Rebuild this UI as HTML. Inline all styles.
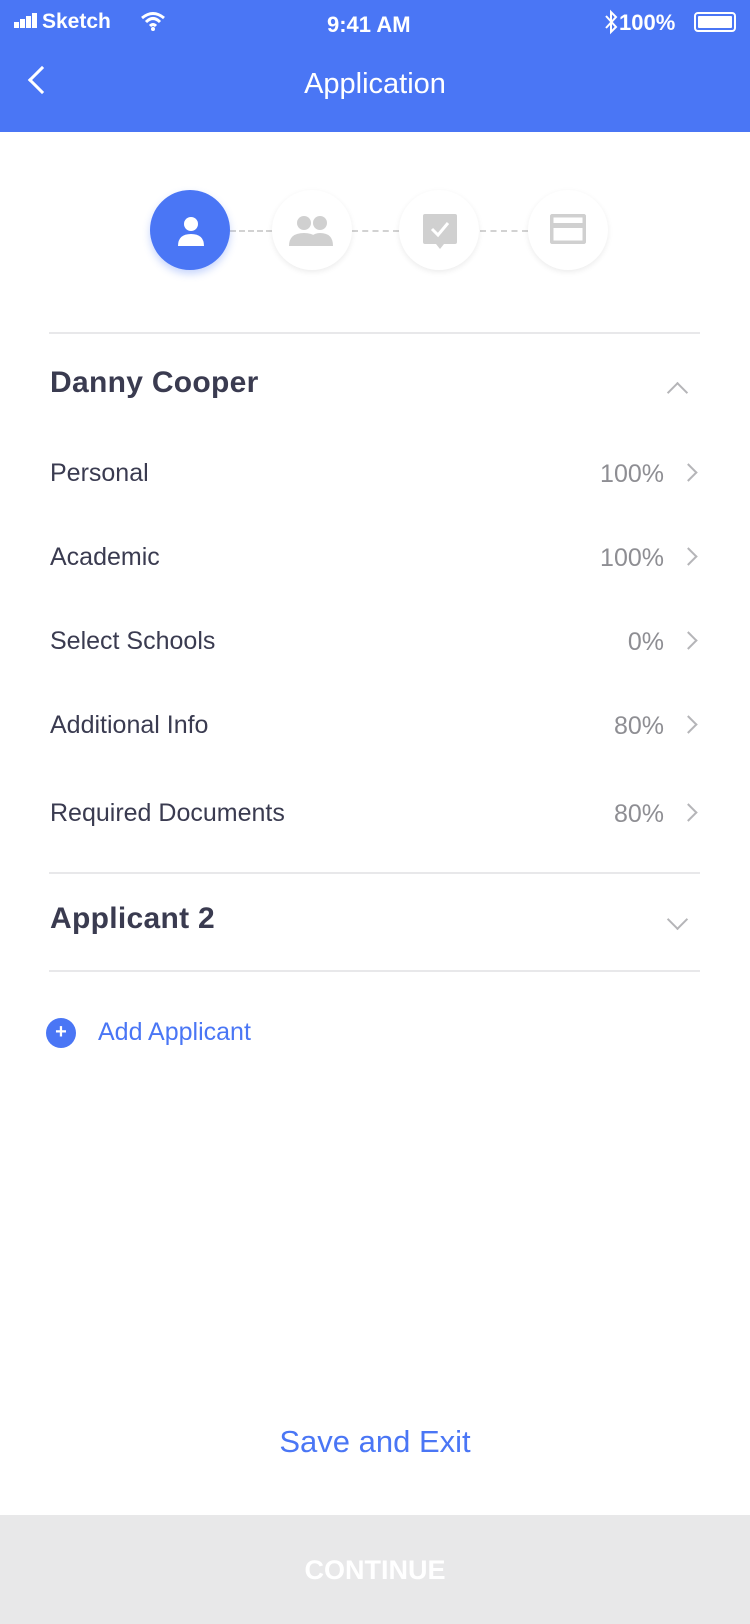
<!DOCTYPE html>
<html><head><meta charset="utf-8"><style>
*{margin:0;padding:0;box-sizing:border-box}
body{width:750px;height:1624px;background:#fff;font-family:"Liberation Sans",sans-serif;position:relative;overflow:hidden;color:#3a3b50}
.a{position:absolute;white-space:nowrap}
.hdr{position:absolute;left:0;top:0;width:750px;height:132px;background:#4a76f5}
.row{position:absolute;left:50px;font-size:25px;color:#3a3b50}
.pct{position:absolute;right:86px;font-size:25px;color:#8e8e93}
.chev{position:absolute;left:684px;width:13px;height:13px;border-right:2px solid #b5b5b8;border-top:2px solid #b5b5b8;transform:rotate(45deg)}
.sep{position:absolute;left:49px;width:651px;height:2px;background:#e8e8ea}
.c{position:absolute;top:190px;width:80px;height:80px;border-radius:50%;background:#fff;box-shadow:0 2px 6px rgba(0,0,0,0.08)}
.dash{position:absolute;top:230px;height:2px;border-top:2px dashed #d2d2d2}
</style></head><body>
<div class="hdr"></div>
<div class="a" style="left:14px;top:10px;color:#fff;font-size:21px;font-weight:bold">
<span style="display:inline-block;width:5px;height:6px;background:#fff;margin-right:1px"></span><span style="display:inline-block;width:5px;height:9px;background:#fff;margin-right:1px"></span><span style="display:inline-block;width:5px;height:12px;background:#fff;margin-right:1px"></span><span style="display:inline-block;width:5px;height:15px;background:#fff;margin-right:5px"></span>Sketch</div>
<svg class="a" style="left:140px;top:10px" width="26" height="22" viewBox="0 0 26 22"><path d="M2 8 Q13 -1 24 8 M6 12 Q13 5 20 12 M10 16 Q13 13 16 16" stroke="#fff" stroke-width="3" fill="none"/><circle cx="13" cy="19" r="2" fill="#fff"/></svg>
<div class="a" style="left:327px;top:12px;color:#fff;font-size:22px;font-weight:bold">9:41 AM</div>
<svg class="a" style="left:604px;top:9px" width="14" height="26" viewBox="0 0 14 26"><path d="M2 7 L12 18 L7 23 V3 L12 8 L2 19" stroke="#fff" stroke-width="2" fill="none"/></svg>
<div class="a" style="left:619px;top:10px;color:#fff;font-size:22px;font-weight:bold">100%</div>
<div class="a" style="left:694px;top:12px;width:42px;height:20px;border:2px solid #fff;border-radius:4px;padding:2px"><div style="width:100%;height:100%;background:#fff;border-radius:1px"></div></div>
<div class="a" style="left:32px;top:70px;width:20px;height:20px;border-left:3px solid #fff;border-bottom:3px solid #fff;transform:rotate(45deg)"></div>
<div class="a" style="left:0;width:750px;text-align:center;top:68px;color:#fff;font-size:29px">Application</div>

<div class="dash" style="left:230px;width:42px"></div>
<div class="dash" style="left:352px;width:47px"></div>
<div class="dash" style="left:480px;width:48px"></div>
<div class="c" style="left:150px;background:#4a76f5;box-shadow:0 4px 8px rgba(74,118,245,0.3)"></div>
<svg class="a" style="left:176px;top:214px" width="30" height="34" viewBox="0 0 30 34"><circle cx="15" cy="10" r="7" fill="#fff"/><path d="M2 32 Q2 20 15 20 Q28 20 28 32Z" fill="#fff"/></svg>
<div class="c" style="left:272px"></div>
<svg class="a" style="left:289px;top:214px" width="46" height="34" viewBox="0 0 46 34"><circle cx="15" cy="9" r="7" fill="#d0d0d0"/><circle cx="31" cy="9" r="7" fill="#d0d0d0"/><path d="M0 32 Q0 19 15 19 Q30 19 30 32Z M20 32 Q20 19 31 19 Q44 19 44 32Z" fill="#d0d0d0"/></svg>
<div class="c" style="left:399px"></div>
<svg class="a" style="left:423px;top:214px" width="34" height="36" viewBox="0 0 34 36"><path d="M0 2 Q0 0 2 0 H32 Q34 0 34 2 V28 Q34 30 32 30 H21 L17 35 L13 30 H2 Q0 30 0 28Z" fill="#d0d0d0"/><path d="M9 15 L15 21 L25 9" stroke="#fff" stroke-width="3" fill="none"/></svg>
<div class="c" style="left:528px"></div>
<svg class="a" style="left:550px;top:214px" width="36" height="30" viewBox="0 0 36 30"><rect x="1.5" y="1.5" width="33" height="27" rx="2" fill="none" stroke="#d0d0d0" stroke-width="4"/><rect x="1" y="9" width="34" height="5" fill="#d0d0d0"/></svg>

<div class="sep" style="top:332px"></div>
<div class="a" style="left:50px;top:366px;font-size:30px;font-weight:bold;color:#3a3b50;letter-spacing:0.3px">Danny Cooper</div>
<div class="a" style="left:670px;top:385px;width:15px;height:15px;border-left:2px solid #b5b5b8;border-top:2px solid #b5b5b8;transform:rotate(45deg)"></div>

<div class="row" style="top:459px">Personal</div><div class="pct" style="top:460px">100%</div><div class="chev" style="top:466px;left:682px"></div>
<div class="row" style="top:543px">Academic</div><div class="pct" style="top:544px">100%</div><div class="chev" style="top:550px;left:682px"></div>
<div class="row" style="top:627px">Select Schools</div><div class="pct" style="top:628px">0%</div><div class="chev" style="top:634px;left:682px"></div>
<div class="row" style="top:711px">Additional Info</div><div class="pct" style="top:712px">80%</div><div class="chev" style="top:718px;left:682px"></div>
<div class="row" style="top:799px">Required Documents</div><div class="pct" style="top:800px">80%</div><div class="chev" style="top:806px;left:682px"></div>

<div class="sep" style="top:872px"></div>
<div class="a" style="left:50px;top:902px;font-size:30px;font-weight:bold;color:#3a3b50;letter-spacing:0.3px">Applicant 2</div>
<div class="a" style="left:670px;top:912px;width:15px;height:15px;border-right:2px solid #b5b5b8;border-bottom:2px solid #b5b5b8;transform:rotate(45deg)"></div>
<div class="sep" style="top:970px"></div>

<div class="a" style="left:46px;top:1018px;width:30px;height:30px;border-radius:50%;background:#4a76f5;color:#fff;font-size:20px;font-weight:bold;text-align:center;line-height:29px">+</div>
<div class="a" style="left:98px;top:1018px;font-size:25px;color:#4a76f5">Add Applicant</div>

<div class="a" style="left:0;width:750px;text-align:center;top:1424px;font-size:31px;color:#4a76f5">Save and Exit</div>
<div class="a" style="left:0;top:1515px;width:750px;height:109px;background:#e8e8e9"></div>
<div class="a" style="left:0;width:750px;text-align:center;top:1555px;font-size:27px;font-weight:bold;color:#fff">CONTINUE</div>
</body></html>
